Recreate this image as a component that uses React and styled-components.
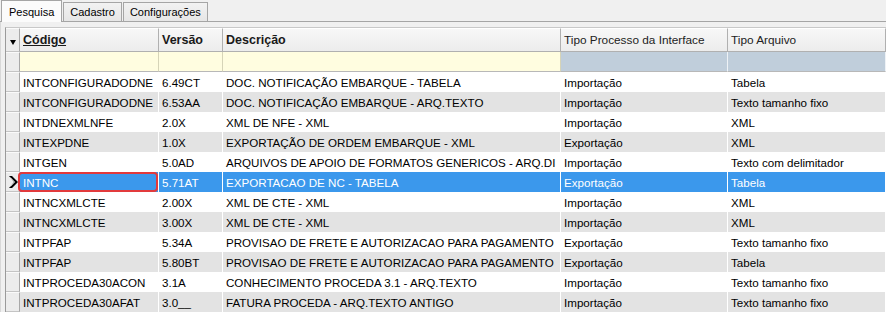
import React from 'react';
import styled, { createGlobalStyle, css } from 'styled-components';

const GlobalStyle = createGlobalStyle`
  body {
    margin: 0;
    background: #f0f0f0;
    font-family: 'Liberation Sans', Arial, sans-serif;
  }
`;

const COLS = '14px 139px 64px 338px 167px 1fr';

const Window = styled.div`
  width: 886px;
  height: 312px;
  overflow: hidden;
  background: #f0f0f0;
`;

const TabStrip = styled.div`
  display: flex;
  align-items: flex-end;
  height: 21px;
  padding-left: 1px;
  border-bottom: 1px solid #a5a5a5;
`;

const Tab = styled.div`
  height: 18px;
  padding: 0 6px;
  margin-right: 1px;
  display: flex;
  align-items: center;
  font-size: 11px;
  color: #000;
  border: 1px solid #a5a5a5;
  border-bottom: none;
  background: linear-gradient(#f2f2f2, #e6e6e6);

  ${(p) =>
    p.$active &&
    css`
      height: 21px;
      background: #fbfbfb;
      padding: 0 7px;
      margin-bottom: -1px;
      position: relative;
    `}
`;

const Page = styled.div`
  padding: 5px 0 0 4px;
  border-left: 1px solid #d8d8d8;
`;

const Grid = styled.div`
  border-left: 1px solid #9a9a9a;
  border-top: 1px solid #c8c8c8;
  font-size: 11.6px;
`;

const Row = styled.div`
  display: grid;
  grid-template-columns: ${COLS};
  height: ${(p) => p.$h}px;
`;

const Cell = styled.div`
  position: relative;
  display: flex;
  align-items: center;
  padding: 0 3px;
  white-space: nowrap;
  overflow: hidden;
  border-right: 1px solid #fff;
  color: ${(p) => (p.$selected ? '#fff' : '#000')};
  background: ${(p) => (p.$selected ? '#3b98ec' : p.$odd ? '#e3e3e3' : '#fff')};

  ${(p) =>
    p.$focus &&
    css`
      overflow: visible;
      &::after {
        content: '';
        position: absolute;
        top: 0;
        bottom: 0;
        left: -2px;
        right: 0;
        border: 2px solid #e23a3c;
        border-radius: 4px;
      }
    `}
`;

const HeadCell = styled.div`
  display: flex;
  align-items: center;
  padding: 0 3px;
  white-space: nowrap;
  overflow: hidden;
  font-size: ${(p) => (p.$bold ? '12.5px' : '11.8px')};
  font-weight: ${(p) => (p.$bold ? 'bold' : 'normal')};
  text-decoration: ${(p) => (p.$underline ? 'underline' : 'none')};
  color: ${(p) => (p.$bold ? '#1a1a1a' : '#222')};
  background: linear-gradient(#f7f7f7, #ececec);
  border-right: 1px solid #b0b0b0;
  border-bottom: 1px solid #b0b0b0;
  border-top: 1px solid #fff;
`;

const FilterCell = styled.div`
  background: ${(p) => (p.$blue ? '#c0cedb' : '#fffde0')};
  border-right: 1px solid ${(p) => (p.$blue ? '#eef2f6' : '#d6d4b8')};
  border-bottom: 1px solid #b8b8b8;
`;

const Indicator = styled.div`
  display: flex;
  align-items: ${(p) => (p.$bottom ? 'flex-end' : 'center')};
  justify-content: center;
  padding-bottom: ${(p) => (p.$bottom ? '5px' : '0')};
  background: #ececec;
  border-top: 1px solid #fafafa;
  border-right: 1px solid #a8a8a8;
  border-bottom: 1px solid #c4c4c4;
  box-sizing: border-box;
`;

const DownArrow = () => (
  <svg width="6" height="6" viewBox="0 0 6 6">
    <polygon points="0,0 6,0 3,5" fill="#000" />
  </svg>
);

const RowArrow = () => (
  <svg width="9" height="12" viewBox="0 0 9 12" style={{ marginLeft: 1 }}>
    <polygon points="0,0 3,0 9,6 3,12 0,12 5,6" fill="#000" />
    <polyline points="1.2,1.5 5.6,6 1.2,10.5" fill="none" stroke="#fff" strokeWidth="0.9" />
  </svg>
);

const rows = [
  ['INTCONFIGURADODNE', '6.49CT', 'DOC. NOTIFICAÇÃO EMBARQUE - TABELA', 'Importação', 'Tabela'],
  ['INTCONFIGURADODNE', '6.53AA', 'DOC. NOTIFICAÇÃO EMBARQUE - ARQ.TEXTO', 'Importação', 'Texto tamanho fixo'],
  ['INTDNEXMLNFE', '2.0X', 'XML DE NFE - XML', 'Importação', 'XML'],
  ['INTEXPDNE', '1.0X', 'EXPORTAÇÃO DE ORDEM EMBARQUE - XML', 'Exportação', 'XML'],
  ['INTGEN', '5.0AD', 'ARQUIVOS DE APOIO DE FORMATOS GENERICOS - ARQ.DI', 'Importação', 'Texto com delimitador'],
  ['INTNC', '5.71AT', 'EXPORTACAO DE NC - TABELA', 'Exportação', 'Tabela'],
  ['INTNCXMLCTE', '2.00X', 'XML DE CTE - XML', 'Importação', 'XML'],
  ['INTNCXMLCTE', '3.00X', 'XML DE CTE - XML', 'Importação', 'XML'],
  ['INTPFAP', '5.34A', 'PROVISAO DE FRETE E AUTORIZACAO PARA PAGAMENTO', 'Exportação', 'Texto tamanho fixo'],
  ['INTPFAP', '5.80BT', 'PROVISAO DE FRETE E AUTORIZACAO PARA PAGAMENTO', 'Exportação', 'Tabela'],
  ['INTPROCEDA30ACON', '3.1A', 'CONHECIMENTO PROCEDA 3.1 - ARQ.TEXTO', 'Importação', 'Texto tamanho fixo'],
  ['INTPROCEDA30AFAT', '3.0__', 'FATURA PROCEDA - ARQ.TEXTO ANTIGO', 'Importação', 'Texto tamanho fixo'],
];

const SELECTED = 5;

export default function App() {
  return (
    <Window>
      <GlobalStyle />
      <TabStrip>
        <Tab $active>Pesquisa</Tab>
        <Tab>Cadastro</Tab>
        <Tab>Configurações</Tab>
      </TabStrip>
      <Page>
        <Grid>
          <Row $h={24}>
            <Indicator $bottom>
              <DownArrow />
            </Indicator>
            <HeadCell $bold $underline>Código</HeadCell>
            <HeadCell $bold>Versão</HeadCell>
            <HeadCell $bold>Descrição</HeadCell>
            <HeadCell>Tipo Processo da Interface</HeadCell>
            <HeadCell>Tipo Arquivo</HeadCell>
          </Row>
          <Row $h={20}>
            <Indicator />
            <FilterCell />
            <FilterCell />
            <FilterCell />
            <FilterCell $blue />
            <FilterCell $blue />
          </Row>
          {rows.map((r, i) => {
            const sel = i === SELECTED;
            const odd = i % 2 === 1;
            return (
              <Row key={i} $h={20}>
                <Indicator>{sel && <RowArrow />}</Indicator>
                {r.map((v, j) => (
                  <Cell key={j} $selected={sel} $odd={odd} $focus={sel && j === 0}>
                    {v}
                  </Cell>
                ))}
              </Row>
            );
          })}
        </Grid>
      </Page>
    </Window>
  );
}
